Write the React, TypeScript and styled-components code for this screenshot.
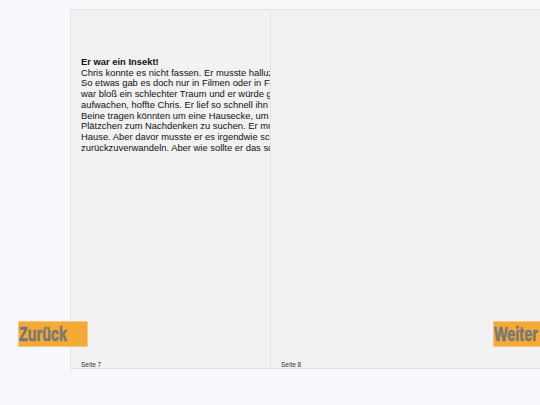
import React from "react";
import styled, { createGlobalStyle } from "styled-components";

const Global = createGlobalStyle`
  html, body { margin: 0; padding: 0; }
  body {
    background: #f7f8fc;
    width: 540px;
    height: 405px;
    overflow: hidden;
    font-family: "Liberation Sans", Arial, sans-serif;
  }
`;

const Stage = styled.div`
  position: relative;
  width: 540px;
  height: 405px;
  overflow: hidden;
  padding: 9px 0 0 70px;
  box-sizing: border-box;
`;

const Book = styled.div`
  display: flex;
  width: 600px;
  height: 360px;
`;

const Page = styled.div<{ $w: number }>`
  position: relative;
  width: ${(p) => p.$w}px;
  height: 100%;
  flex: none;
  box-sizing: border-box;
  background: #f2f2f2;
  border: 1px solid #e3e3e3;
  border-right: none;
  overflow: hidden;
  padding: 47px 0 0 10px;
  display: flex;
  flex-direction: column;
`;

const Text = styled.div`
  width: 260px;
  font-size: 9.4px;
  line-height: 10.7px;
  color: #111;
  white-space: nowrap;
`;

const Title = styled.div`
  font-weight: bold;
`;

const PageNo = styled.div`
  margin-top: auto;
  font-size: 6.5px;
  color: #333;
  line-height: 8px;
  margin-bottom: -1px;
`;

const NavButton = styled.button<{ $left: number }>`
  position: absolute;
  top: 321px;
  left: ${(p) => p.$left}px;
  width: 70px;
  height: 26px;
  box-sizing: border-box;
  margin: 0;
  padding: 0;
  background: #f6aa36;
  border: 1px solid #f8c880;
  cursor: pointer;
  overflow: hidden;
  white-space: nowrap;
  text-align: left;
`;

const Label = styled.span`
  display: inline-block;
  transform: scale(0.72, 1.05);
  transform-origin: left center;
  color: #777777;
  font-family: "Liberation Sans", Arial, sans-serif;
  font-weight: bold;
  font-size: 20px;
  line-height: 24px;
  -webkit-text-stroke: 0.6px #777777;
`;

const lines = [
  "Chris konnte es nicht fassen. Er musste halluzinieren.",
  "So etwas gab es doch nur in Filmen oder in Fantasy-Büchern.",
  "war bloß ein schlechter Traum und er würde gleich",
  "aufwachen, hoffte Chris. Er lief so schnell ihn seine",
  "Beine tragen könnten um eine Hausecke, um sich ein",
  "Plätzchen zum Nachdenken zu suchen. Er musste nach",
  "Hause. Aber davor musste er es irgendwie schaffen, sich",
  "zurückzuverwandeln. Aber wie sollte er das schaffen?",
];

export default function App() {
  return (
    <>
      <Global />
      <Stage>
        <Book>
          <Page $w={200}>
            <Text>
              <Title>Er war ein Insekt!</Title>
              {lines.map((l, i) => (
                <div key={i}>{l}</div>
              ))}
            </Text>
            <PageNo>Seite 7</PageNo>
          </Page>
          <Page $w={300}>
            <Text />
            <PageNo>Seite 8</PageNo>
          </Page>
        </Book>
        <NavButton $left={18}>
          <Label>Zurück</Label>
        </NavButton>
        <NavButton $left={493}>
          <Label>Weiter</Label>
        </NavButton>
      </Stage>
    </>
  );
}
